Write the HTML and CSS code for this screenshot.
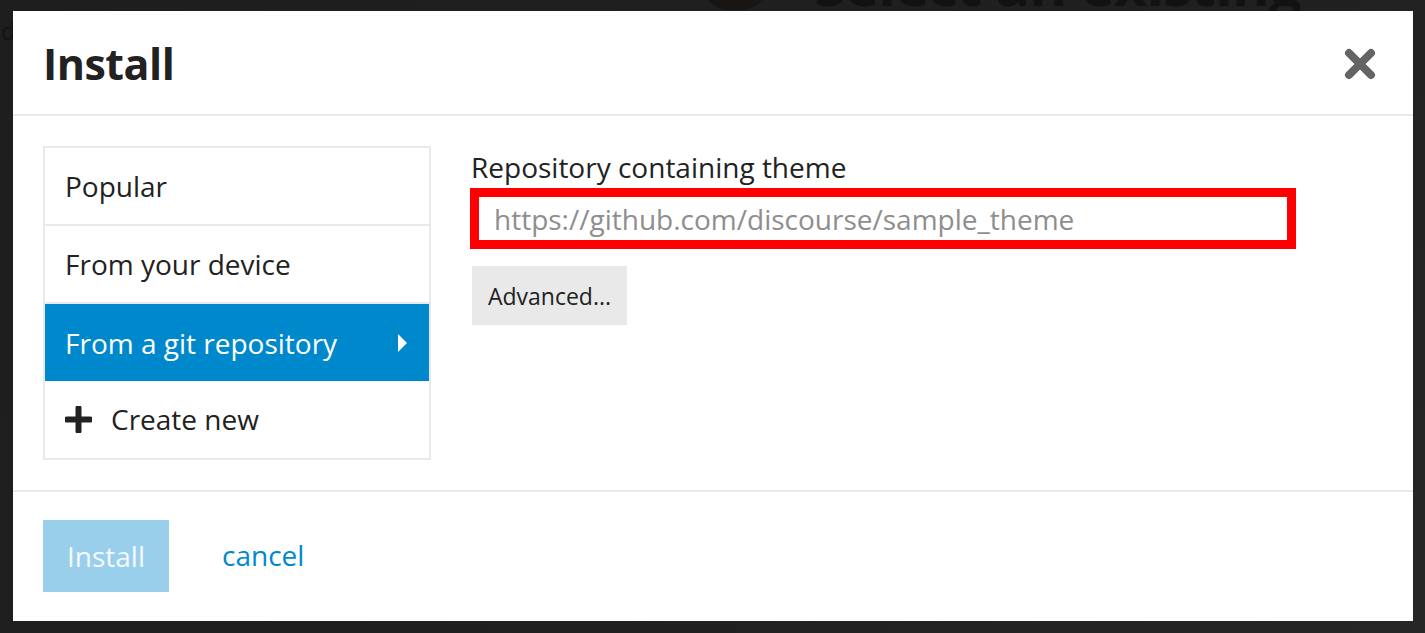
FILE: index.html
```html
<!DOCTYPE html>
<html>
<head>
<meta charset="utf-8">
<link rel="stylesheet" href="styles.css">
</head>
<body>
<div class="backdrop" aria-hidden="true">
  <div class="bg-avatar"></div>
  <div class="bg-title">Select an existing</div>
  <div class="bg-letter">d</div>
</div>
<div class="modal">
  <div class="modal-header">
    <h1 class="title">Install</h1>
    <button class="close" aria-label="close">
      <svg width="32" height="32" viewBox="0 0 32 32"><path d="M5 5 L27 27 M27 5 L5 27" stroke="#646464" stroke-width="8" stroke-linecap="round" fill="none"/></svg>
    </button>
  </div>
  <div class="modal-body">
    <ul class="nav">
      <li class="nav-item">Popular</li>
      <li class="nav-item">From your device</li>
      <li class="nav-item active">From a git repository
        <svg class="caret" width="11" height="18" viewBox="0 0 11 18"><path d="M1 0 L10 9 L1 18 Z" fill="#fff"/></svg>
      </li>
      <li class="nav-item"><svg class="plus" width="27" height="27" viewBox="0 0 27 27"><path d="M13.5 2 V25 M2 13.5 H25" stroke="#222" stroke-width="6" stroke-linecap="round"/></svg>Create new</li>
    </ul>
    <div class="content">
      <label class="label">Repository containing theme</label>
      <div class="input">https://github.com/discourse/sample_theme</div>
      <button class="btn-advanced">Advanced...</button>
    </div>
  </div>
  <div class="modal-footer">
    <button class="btn-install">Install</button>
    <a class="cancel">cancel</a>
  </div>
</div>
</body>
</html>
```

FILE: styles.css
```css
html, body {
  margin: 0;
  padding: 0;
}
body {
  width: 1425px;
  height: 633px;
  background: linear-gradient(135deg, #1e1e1e 0%, #202020 60%, #262626 100%);
  font-family: "Open Sans", "Noto Sans", sans-serif;
  overflow: hidden;
  position: relative;
}
.backdrop {
  position: absolute;
  inset: 0;
}
.bg-avatar {
  position: absolute;
  left: 702px;
  top: -44px;
  width: 66px;
  height: 54px;
  border-radius: 30px;
  background: #181512;
}
.bg-title {
  position: absolute;
  left: 814px;
  top: -45px;
  font-size: 58px;
  line-height: 1;
  font-weight: 700;
  letter-spacing: -1px;
  color: #121212;
  white-space: nowrap;
}
.bg-letter {
  position: absolute;
  left: 1px;
  top: 14px;
  font-size: 24px;
  color: #131313;
}
.modal {
  position: relative;
  margin-left: 13px;
  margin-top: 11px;
  width: 1400px;
  height: 610px;
  background: #fff;
  display: flex;
  flex-direction: column;
  box-sizing: border-box;
}
.modal-header {
  height: 105px;
  border-bottom: 2px solid #e9e9e9;
  display: flex;
  align-items: center;
  justify-content: space-between;
  padding: 0 37px 0 30px;
  box-sizing: border-box;
}
.title {
  margin: 0;
  font-size: 43px;
  font-weight: 700;
  color: #222;
  letter-spacing: -0.5px;
  padding-top: 2px;
}
.close {
  border: 0;
  background: none;
  padding: 0;
  width: 32px;
  height: 32px;
  display: flex;
  margin-top: 2px;
}
.modal-body {
  display: flex;
  padding: 30px 30px 0 30px;
  height: 376px;
  box-sizing: border-box;
  border-bottom: 2px solid #e9e9e9;
}
.nav {
  list-style: none;
  margin: 0;
  padding: 0;
  width: 388px;
  height: 314px;
  border: 2px solid #e9e9e9;
  box-sizing: border-box;
}
.nav-item {
  height: 76px;
  border-bottom: 2px solid #e9e9e9;
  display: flex;
  align-items: center;
  padding: 0 21px 0 20px;
  font-size: 28px;
  color: #222;
  box-sizing: content-box;
}
.nav-item:last-child {
  border-bottom: 0;
}
.nav-item.active {
  background: #0088cc;
  color: #fff;
  justify-content: space-between;
  height: 77px;
  border-bottom: 0;
}
.plus {
  margin-right: 19px;
  flex: none;
}
.content {
  margin-left: 40px;
  display: flex;
  flex-direction: column;
  align-items: flex-start;
  margin-top: 4px;
}
.label {
  font-size: 28px;
  color: #222;
  line-height: 34px;
  margin-bottom: 4px;
}
.input {
  width: 826px;
  height: 61px;
  border: 9px solid #ff0000;
  box-sizing: border-box;
  padding-left: 15px;
  font-size: 28px;
  color: #8e8e8e;
  display: flex;
  align-items: center;
  margin-left: -1px;
}
.btn-advanced {
  margin-top: 17px;
  height: 59px;
  width: 155px;
  border: 0;
  background: #e9e9e9;
  font-family: inherit;
  font-size: 23px;
  color: #222;
  padding: 0;
  margin-left: 1px;
}
.modal-footer {
  display: flex;
  align-items: center;
  padding: 28px 30px 0 30px;
}
.btn-install {
  width: 126px;
  height: 72px;
  border: 0;
  background: #9acfeb;
  color: #f4fafd;
  font-family: inherit;
  font-size: 28px;
  padding: 0;
}
.cancel {
  margin-left: 53px;
  font-size: 28px;
  color: #0088cc;
  padding-bottom: 2px;
}
```
